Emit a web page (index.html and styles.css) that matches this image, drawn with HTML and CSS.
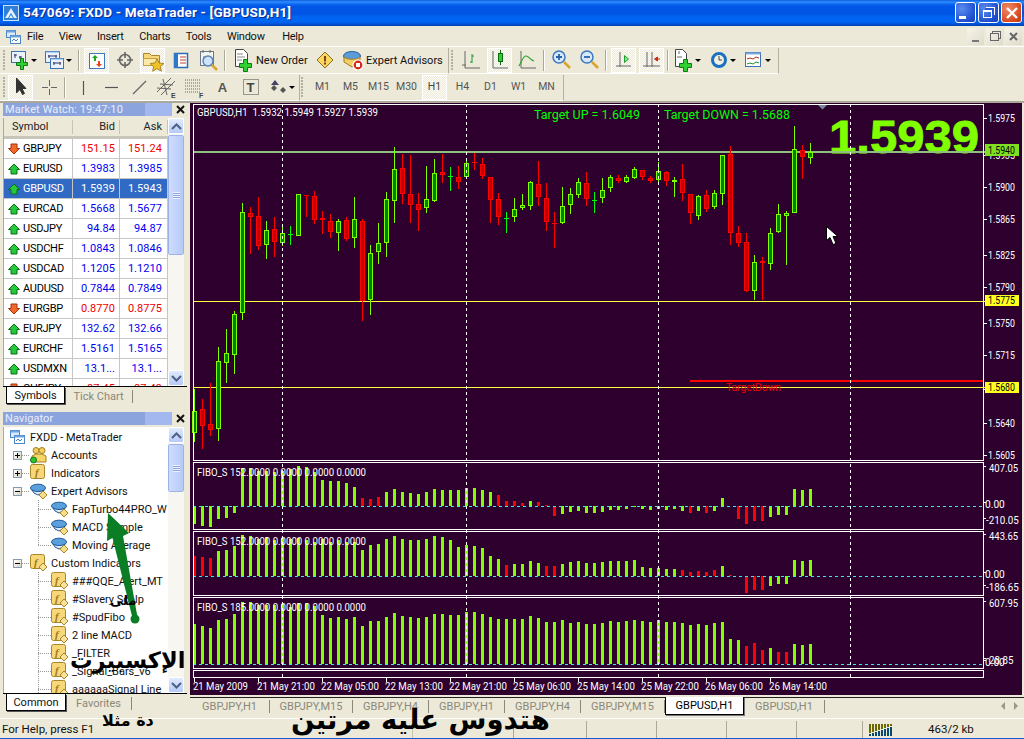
FILE: index.html
```html
<!DOCTYPE html>
<html lang="en">
<head>
<meta charset="utf-8">
<title>547069: FXDD - MetaTrader - [GBPUSD,H1]</title>
<link rel="stylesheet" href="styles.css">
</head>
<body>
<svg class="defs" width="0" height="0">
  <defs>
    <symbol id="s-app" viewBox="0 0 16 16"><rect x=".5" y=".5" width="15" height="15" fill="#2f7fd6" stroke="#cfe3fa"/><path d="M2 13 8 3l6 10H11L8 8l-3 5zM6 13l2-3 2 3z" fill="#dff1ff"/></symbol>
    <symbol id="s-mdi" viewBox="0 0 16 16"><rect x="1.5" y="1.5" width="9" height="7" fill="#dcebfb" stroke="#4a86c8"/><rect x="1.5" y="1.5" width="9" height="2" fill="#6fa3dc"/><rect x="5.5" y="6.5" width="10" height="8" fill="#fff" stroke="#4a86c8"/><rect x="5.5" y="6.5" width="10" height="2" fill="#6fa3dc"/><path d="M7 12l2-2 2 2 2-2" fill="none" stroke="#3c78c0"/></symbol>
    <symbol id="s-newchart" viewBox="0 0 24 24"><rect x="3.5" y="3.5" width="14" height="11" fill="#eaf3fd" stroke="#3a72b5"/><path d="M6 7h3M7 6v4M11 9h3M12 8v3" stroke="#336" fill="none"/><path d="M12.500 10.500h3v4h4v3h-4v4h-3v-4h-4v-3h4z" fill="#2fd02f" stroke="#0b7a16"/></symbol>
    <symbol id="s-profiles" viewBox="0 0 24 24"><rect x="2.5" y="3.5" width="14" height="11" fill="#eaf3fd" stroke="#3a72b5"/><rect x="2.5" y="3.5" width="14" height="1" fill="#7fa9e0"/><path d="M5 8h9M6 7v3M13 7v3" stroke="#336" fill="none"/><rect x="7.5" y="10.5" width="13" height="10" fill="#eaf3fd" stroke="#3a72b5"/><rect x="7.5" y="10.5" width="13" height="1" fill="#7fa9e0"/><path d="M10 15h8M11 14v3M17 14v3" stroke="#336" fill="none"/></symbol>
    <symbol id="s-market" viewBox="0 0 24 24"><rect x="4.500" y="5.500" width="15" height="15" fill="#fbfdff" stroke="#3f78bb"/><path d="M10 7l-3 3h2v3h2v-3h2z" fill="#17a81f"/><path d="M14 19l3-3h-2v-3h-2v3h-2z" fill="#e8401d"/></symbol>
    <symbol id="s-cross" viewBox="0 0 24 24"><circle cx="12" cy="12" r="5.5" fill="none" stroke="#666" stroke-width="1.6"/><path d="M12 4v6M12 14v6M4 12h6M14 12h6" stroke="#666" stroke-width="1.6"/></symbol>
    <symbol id="s-folder" viewBox="0 0 24 24"><path d="M2.5 5.500h6l2 2h8v10h-16z" fill="#f6d77a" stroke="#a9852d"/><path d="M2.5 10.500h14v7h-14z" fill="#fbe9a9" stroke="#c5a13e"/><path d="M16 11l2 4 5 .5-3.700 3.200 1.100 4.500-4.400-2.600-4.400 2.600 1.100-4.500L9 15.500l5-.5z" fill="#f0c224" stroke="#a9852d"/></symbol>
    <symbol id="s-book" viewBox="0 0 24 24"><rect x="5.500" y="5.500" width="13" height="14" fill="#fff" stroke="#2b6cb5" stroke-width="1.500"/><rect x="5" y="5" width="4" height="15" fill="#2e78c9"/><path d="M11 9h6M11 12h6M11 15h6" stroke="#b43" fill="none"/></symbol>
    <symbol id="s-tester" viewBox="0 0 24 24"><rect x="3.500" y="3.500" width="13" height="14" fill="#f5f5f0" stroke="#6a7a8a"/><path d="M6 2v3M13 2v3M6 9h8M6 12h4" stroke="#666"/><circle cx="11" cy="13" r="5" fill="#cfe2fa" stroke="#5b82b4" stroke-width="1.500"/><path d="M15 17l5 5" stroke="#d6a530" stroke-width="2.500"/></symbol>
    <symbol id="s-order" viewBox="0 0 24 24"><path d="M3.500 1.500h8l4 4v13h-12z" fill="#fff" stroke="#444"/><path d="M5 6h6M5 9h8M5 12h5" stroke="#888"/><path d="M11.500 11.500h4v4h4v4h-4v4h-4v-4h-4v-4h4z" fill="#2fd02f" stroke="#0b7a16"/></symbol>
    <symbol id="s-warn" viewBox="0 0 24 24"><path d="M12 4 20 12 12 20 4 12z" fill="#f8d860" stroke="#8a6f20"/><rect x="11" y="8" width="2" height="5.500" fill="#8a3d10"/><rect x="11" y="14.500" width="2" height="2" fill="#8a3d10"/></symbol>
    <symbol id="s-ea" viewBox="0 0 24 24"><ellipse cx="10" cy="8" rx="8.500" ry="4.500" fill="#5b9bd8" stroke="#2a5f9e"/><path d="M2 9c3 3 13 3 16 0v5l-8 5-8-5z" fill="#f3cd66" stroke="#a07d24"/><circle cx="16" cy="17" r="5" fill="#d8281a" stroke="#fff" stroke-width="1.200"/><rect x="14" y="15" width="4" height="4" fill="#fff"/></symbol>
    <symbol id="s-bars" viewBox="0 0 24 24"><path d="M5 3v17h15" fill="none" stroke="#666"/><path d="M2 17h4" stroke="#666"/><path d="M12 6v9M10 14h2M12 8h2" stroke="#1a9d2a" fill="none"/></symbol>
    <symbol id="s-candle" viewBox="0 0 24 24"><path d="M5 3v17h15" fill="none" stroke="#666"/><path d="M12.500 2v15" stroke="#0a6a12"/><rect x="10.500" y="5.500" width="4" height="8" fill="#2cd12c" stroke="#0a6a12"/></symbol>
    <symbol id="s-line" viewBox="0 0 24 24"><path d="M5 3v17h15" fill="none" stroke="#666"/><path d="M3 18c3-5 4-10 7-10s4 4 8 5" fill="none" stroke="#2aa32a" stroke-width="1.200"/></symbol>
    <symbol id="s-zin" viewBox="0 0 24 24"><circle cx="10" cy="9" r="6" fill="#d7e8fb" stroke="#3a78c0" stroke-width="1.500"/><path d="M7 9h6M10 6v6" stroke="#2a62a8" stroke-width="1.800"/><path d="M15 14l6 6" stroke="#d9a32d" stroke-width="2.500"/></symbol>
    <symbol id="s-zout" viewBox="0 0 24 24"><circle cx="10" cy="9" r="6" fill="#d7e8fb" stroke="#3a78c0" stroke-width="1.500"/><path d="M7 9h6" stroke="#2a62a8" stroke-width="1.800"/><path d="M15 14l6 6" stroke="#d9a32d" stroke-width="2.500"/></symbol>
    <symbol id="s-shift" viewBox="0 0 24 24"><path d="M8 4v15M4 18h15" fill="none" stroke="#666"/><path d="M12.500 7.500l4 3.500-4 3.500z" fill="#8fe08f" stroke="#1a9d2a"/></symbol>
    <symbol id="s-scroll" viewBox="0 0 24 24"><path d="M7 4v15M12 4v15M3 18h17" fill="none" stroke="#666"/><path d="M20 11h-4M17.500 9l-3 2 3 2z" fill="#c52a0e" stroke="#c52a0e"/></symbol>
    <symbol id="s-pageplus" viewBox="0 0 24 24"><path d="M3.500 1.500h7l4 4v13h-11z" fill="#fff" stroke="#444"/><path d="M7 3v3M5 9h5" stroke="#666"/><path d="M11.500 11.500h4v4h4v4h-4v4h-4v-4h-4v-4h4z" fill="#2fd02f" stroke="#0b7a16"/></symbol>
    <symbol id="s-clock" viewBox="0 0 24 24"><circle cx="12" cy="12" r="6.500" fill="#f2f0e2" stroke="#1c70c0" stroke-width="3"/><path d="M12 8v4h3" fill="none" stroke="#444"/></symbol>
    <symbol id="s-indic" viewBox="0 0 24 24"><rect x="3.500" y="4.500" width="15" height="14" fill="#fff" stroke="#3a72b5"/><rect x="3.500" y="4.500" width="15" height="2" fill="#7fa9e0"/><path d="M5 11l3-1 3 1 3-2 3 1" fill="none" stroke="#b5320e"/><path d="M5 16l3-1 3 1 3-2 3 1" fill="none" stroke="#2a8a2a"/></symbol>
    <symbol id="s-cursor" viewBox="0 0 24 24"><path d="M8.500 4v15l3.500-3.500 2.500 5 2-1-2.500-5H18z" fill="#333" stroke="#333" stroke-linejoin="round" transform="translate(-1 -1)"/></symbol>
    <symbol id="s-hair" viewBox="0 0 24 24"><path d="M12.500 5v6M12.500 14v6M5 12.500h6M14 12.500h6" stroke="#666"/></symbol>
    <symbol id="s-vline" viewBox="0 0 24 24"><path d="M12.500 6v14" stroke="#555" stroke-width="1.200"/></symbol>
    <symbol id="s-hline" viewBox="0 0 24 24"><path d="M6 12.500h13" stroke="#555" stroke-width="1.200"/></symbol>
    <symbol id="s-trend" viewBox="0 0 24 24"><path d="M6 19 19 6" stroke="#666" stroke-width="1.200"/></symbol>
    <symbol id="s-channel" viewBox="0 0 24 24"><path d="M2 17 16 3M6 20 20 6M5 9l13 1M2 13l14 1M8 4l4 16" stroke="#666" fill="none"/><text x="16" y="23" class="icon-letter">E</text></symbol>
    <symbol id="s-fibo" viewBox="0 0 24 24"><path d="M2 5h16M2 8h16M2 11h16M2 14h16M2 17h16" stroke="#666" stroke-dasharray="1 1"/><text x="16" y="23" class="icon-letter">F</text></symbol>
    <symbol id="s-textbox" viewBox="0 0 24 24"><rect x="4.500" y="4.500" width="15" height="15" fill="none" stroke="#444" stroke-dasharray="1 1"/><text x="7.500" y="17" class="icon-tee">T</text></symbol>
    <symbol id="s-arrows" viewBox="0 0 24 24"><path d="M9 5l4 5H5z" fill="#446" /><path d="M17 12l3 3-3 3-3-3zM8 10l3 3-3 3-3-3z" fill="#555"/></symbol>
    <symbol id="s-up" viewBox="0 0 14 12"><path d="M7 1 12.500 6.500H10V11H4V6.500H1.500z" fill="#25c83a" stroke="#0b6e1b"/></symbol>
    <symbol id="s-down" viewBox="0 0 14 12"><path d="M7 11 12.500 5.500H10V1H4V5.500H1.500z" fill="#f0682a" stroke="#a62f0c"/></symbol>
    <symbol id="s-accounts" viewBox="0 0 18 18"><circle cx="6" cy="4.500" r="3" fill="#f3ce5e" stroke="#a57f1f"/><circle cx="12" cy="4.500" r="3" fill="#f3ce5e" stroke="#a57f1f"/><path d="M2 15v-5l4-2 6 0 4 2v6H4z" fill="#f5d565" stroke="#a57f1f"/><circle cx="3.500" cy="14" r="3" fill="#2fc22f" stroke="#0d7a19"/></symbol>
    <symbol id="s-f" viewBox="0 0 18 18"><rect x=".5" y=".5" width="14" height="14" rx="2" fill="#f6d87a" stroke="#a88528"/><text x="5" y="11.500" class="icon-f">f</text></symbol>
    <symbol id="s-fd" viewBox="0 0 18 18"><rect x=".5" y=".5" width="14" height="14" rx="2" fill="#f6d87a" stroke="#a88528"/><text x="4" y="11.500" class="icon-f">f</text><path d="M13 9l4 4-4 4-4-4z" fill="#f6e29a" stroke="#a88528"/></symbol>
    <symbol id="s-hat" viewBox="0 0 18 18"><ellipse cx="8" cy="6" rx="7.500" ry="3.800" fill="#5aa0dc" stroke="#22599a"/><path d="M2 8c3 2 9 2 12 0l-2 3-4 2-4-2z" fill="#dfeaf5" stroke="#22599a"/><path d="M13 9l4 4-4 4-4-4z" fill="#f6dd86" stroke="#a88528"/></symbol>
    <symbol id="s-close" viewBox="0 0 9 9"><path d="M1 1l7 7M8 1 1 8" stroke="#111" stroke-width="2"/></symbol>
    <symbol id="s-sup" viewBox="0 0 11 7"><path d="M1 6l4.500-4.500L10 6" fill="none" stroke="#4d6185" stroke-width="2"/></symbol>
    <symbol id="s-sdn" viewBox="0 0 11 7"><path d="M1 1l4.500 4.500L10 1" fill="none" stroke="#4d6185" stroke-width="2"/></symbol>
  </defs>
</svg>

<div class="app">
  <header class="titlebar">
    <svg class="app-icon"><use href="#s-app"/></svg>
    <div class="title-text">547069: FXDD - MetaTrader - [GBPUSD,H1]</div>
    <div class="winbtns">
      <div class="winbtn"><span class="glyph-min"></span></div>
      <div class="winbtn"><span class="glyph-res"></span></div>
      <div class="winbtn winbtn-close"><svg class="glyph-x" viewBox="0 0 12 12"><path d="M1 1l10 10M11 1 1 11" stroke="#fff" stroke-width="2.400"/></svg></div>
    </div>
  </header>

  <nav class="menubar">
    <svg class="mdi-icon"><use href="#s-mdi"/></svg>
    <span class="menu m-first">File</span>
    <span class="menu">View</span>
    <span class="menu">Insert</span>
    <span class="menu">Charts</span>
    <span class="menu">Tools</span>
    <span class="menu">Window</span>
    <span class="menu m-help">Help</span>
    <div class="mdibtns">
      <span class="mdibtn"><span class="mdi-min"></span></span>
      <span class="mdibtn"><span class="mdi-res"></span></span>
      <span class="mdibtn"><svg class="mdi-x" viewBox="0 0 9 9"><path d="M1 1l7 7M8 1 1 8" stroke="#666" stroke-width="2"/></svg></span>
    </div>
  </nav>

  <div class="tbrow">
    <div class="tbgroup g1">
      <span class="grip"></span>
      <div class="tb w32"><svg class="ic"><use href="#s-newchart"/></svg><i class="drop"></i></div>
      <div class="tb w32"><svg class="ic"><use href="#s-profiles"/></svg><i class="drop"></i></div>
      <span class="sep sep-b"></span>
      <div class="tb on"><svg class="ic"><use href="#s-market"/></svg></div>
      <div class="tb"><svg class="ic"><use href="#s-cross"/></svg></div>
      <div class="tb on"><svg class="ic"><use href="#s-folder"/></svg></div>
      <div class="tb"><svg class="ic"><use href="#s-book"/></svg></div>
      <div class="tb"><svg class="ic"><use href="#s-tester"/></svg></div>
      <span class="sep sep-b"></span>
      <div class="tb w79"><svg class="ic"><use href="#s-order"/></svg><span class="tb-label">New Order</span></div>
      <div class="tb"><svg class="ic"><use href="#s-warn"/></svg></div>
      <div class="tb w105"><svg class="ic"><use href="#s-ea"/></svg><span class="tb-label">Expert Advisors</span></div>
    </div>
    <div class="tbgroup g2">
      <span class="grip grip-b"></span>
      <div class="tb"><svg class="ic"><use href="#s-bars"/></svg></div>
      <div class="tb on"><svg class="ic"><use href="#s-candle"/></svg></div>
      <div class="tb"><svg class="ic"><use href="#s-line"/></svg></div>
      <span class="sep"></span>
      <div class="tb"><svg class="ic"><use href="#s-zin"/></svg></div>
      <div class="tb"><svg class="ic"><use href="#s-zout"/></svg></div>
      <span class="sep sep-c"></span>
      <div class="tb on"><svg class="ic"><use href="#s-shift"/></svg></div>
      <div class="tb on"><svg class="ic"><use href="#s-scroll"/></svg></div>
      <span class="sep"></span>
      <div class="tb w32"><svg class="ic"><use href="#s-pageplus"/></svg><i class="drop"></i></div>
      <div class="tb w32"><svg class="ic"><use href="#s-clock"/></svg><i class="drop"></i></div>
      <div class="tb w32"><svg class="ic"><use href="#s-indic"/></svg><i class="drop"></i></div>
    </div>
  </div>

  <div class="tbrow tbrow-2">
    <div class="tbgroup g3">
      <span class="grip"></span>
      <div class="tb on"><svg class="ic"><use href="#s-cursor"/></svg></div>
      <div class="tb"><svg class="ic"><use href="#s-hair"/></svg></div>
      <span class="sep sep-b"></span>
      <div class="tb"><svg class="ic"><use href="#s-vline"/></svg></div>
      <div class="tb"><svg class="ic"><use href="#s-hline"/></svg></div>
      <div class="tb"><svg class="ic"><use href="#s-trend"/></svg></div>
      <div class="tb"><svg class="ic"><use href="#s-channel"/></svg></div>
      <div class="tb"><svg class="ic"><use href="#s-fibo"/></svg></div>
      <div class="tb tb-letter">A</div>
      <div class="tb"><svg class="ic"><use href="#s-textbox"/></svg></div>
      <div class="tb w32"><svg class="ic"><use href="#s-arrows"/></svg><i class="drop"></i></div>
    </div>
    <div class="tbgroup g4">
      <span class="grip grip-c"></span>
      <div class="tb tf">M1</div>
      <div class="tb tf">M5</div>
      <div class="tb tf">M15</div>
      <div class="tb tf">M30</div>
      <div class="tb tf on">H1</div>
      <div class="tb tf">H4</div>
      <div class="tb tf">D1</div>
      <div class="tb tf">W1</div>
      <div class="tb tf">MN</div>
    </div>
  </div>

  <main class="workspace">
    <aside class="leftcol">
      <section class="panel panel-mw">
        <div class="panel-head"><div class="panel-title">Market Watch: 19:47:10</div><svg class="panel-x"><use href="#s-close"/></svg></div>
        <div class="panel-body">
          <div class="listview">
            <div class="lv-head"><span class="c1">Symbol</span><span class="c2">Bid</span><span class="c3">Ask</span></div>
            <div class="lv-band"></div>
            <div class="lv-row dn"><span class="c1"><svg class="arrow"><use href="#s-down"/></svg>GBPJPY</span><span class="c2">151.15</span><span class="c3">151.24</span></div>
            <div class="lv-row"><span class="c1"><svg class="arrow"><use href="#s-up"/></svg>EURUSD</span><span class="c2">1.3983</span><span class="c3">1.3985</span></div>
            <div class="lv-row sel"><span class="c1"><svg class="arrow"><use href="#s-up"/></svg>GBPUSD</span><span class="c2">1.5939</span><span class="c3">1.5943</span></div>
            <div class="lv-row"><span class="c1"><svg class="arrow"><use href="#s-up"/></svg>EURCAD</span><span class="c2">1.5668</span><span class="c3">1.5677</span></div>
            <div class="lv-row"><span class="c1"><svg class="arrow"><use href="#s-up"/></svg>USDJPY</span><span class="c2">94.84</span><span class="c3">94.87</span></div>
            <div class="lv-row"><span class="c1"><svg class="arrow"><use href="#s-up"/></svg>USDCHF</span><span class="c2">1.0843</span><span class="c3">1.0846</span></div>
            <div class="lv-row"><span class="c1"><svg class="arrow"><use href="#s-up"/></svg>USDCAD</span><span class="c2">1.1205</span><span class="c3">1.1210</span></div>
            <div class="lv-row"><span class="c1"><svg class="arrow"><use href="#s-up"/></svg>AUDUSD</span><span class="c2">0.7844</span><span class="c3">0.7849</span></div>
            <div class="lv-row dn"><span class="c1"><svg class="arrow"><use href="#s-down"/></svg>EURGBP</span><span class="c2">0.8770</span><span class="c3">0.8775</span></div>
            <div class="lv-row"><span class="c1"><svg class="arrow"><use href="#s-up"/></svg>EURJPY</span><span class="c2">132.62</span><span class="c3">132.66</span></div>
            <div class="lv-row"><span class="c1"><svg class="arrow"><use href="#s-up"/></svg>EURCHF</span><span class="c2">1.5161</span><span class="c3">1.5165</span></div>
            <div class="lv-row"><span class="c1"><svg class="arrow"><use href="#s-up"/></svg>USDMXN</span><span class="c2">13.1...</span><span class="c3">13.1...</span></div>
            <div class="lv-row dn"><span class="c1"><svg class="arrow"><use href="#s-down"/></svg>CHFJPY</span><span class="c2">87.45</span><span class="c3">87.49</span></div>
          </div>
          <div class="scrollbar">
            <div class="sb-btn"><svg class="sb-ic"><use href="#s-sup"/></svg></div>
            <div class="sb-track"><div class="sb-thumb thumb-mw"><i class="grips"></i></div></div>
            <div class="sb-btn"><svg class="sb-ic"><use href="#s-sdn"/></svg></div>
          </div>
        </div>
        <div class="ptabs"><span class="ptab active t-sym">Symbols</span><span class="ptab t-tick">Tick Chart</span></div>
      </section>

      <section class="panel panel-nav">
        <div class="panel-head"><div class="panel-title">Navigator</div><svg class="panel-x"><use href="#s-close"/></svg></div>
        <div class="panel-body body-nav">
          <div class="tree">
            <div class="node lv0"><svg class="ti ti0"><use href="#s-mdi"/></svg>FXDD - MetaTrader</div>
            <div class="node lv1"><i class="exp plus"></i><i class="dots"></i><svg class="ti"><use href="#s-accounts"/></svg>Accounts</div>
            <div class="node lv1"><i class="exp plus"></i><i class="dots"></i><svg class="ti"><use href="#s-f"/></svg>Indicators</div>
            <div class="node lv1"><i class="exp"></i><i class="dots"></i><svg class="ti"><use href="#s-hat"/></svg>Expert Advisors</div>
            <div class="node lv2"><i class="conn"></i><svg class="ti"><use href="#s-hat"/></svg>FapTurbo44PRO_W</div>
            <div class="node lv2"><i class="conn"></i><svg class="ti"><use href="#s-hat"/></svg>MACD Sample</div>
            <div class="node lv2"><i class="conn conn-end"></i><svg class="ti"><use href="#s-hat"/></svg>Moving Average</div>
            <div class="node lv1"><i class="exp"></i><i class="dots"></i><svg class="ti"><use href="#s-fd"/></svg>Custom Indicators</div>
            <div class="node lv2"><i class="conn"></i><svg class="ti"><use href="#s-fd"/></svg>###QQE_Alert_MT</div>
            <div class="node lv2"><i class="conn"></i><svg class="ti"><use href="#s-fd"/></svg>#Slavery Scalp</div>
            <div class="node lv2"><i class="conn"></i><svg class="ti"><use href="#s-fd"/></svg>#SpudFibo</div>
            <div class="node lv2"><i class="conn"></i><svg class="ti"><use href="#s-fd"/></svg>2 line MACD</div>
            <div class="node lv2"><i class="conn"></i><svg class="ti"><use href="#s-fd"/></svg>_FILTER</div>
            <div class="node lv2"><i class="conn"></i><svg class="ti"><use href="#s-fd"/></svg>_Signal_Bars_v6</div>
            <div class="node lv2"><i class="conn"></i><svg class="ti"><use href="#s-fd"/></svg>aaaaaaSignal Line</div>
          </div>
          <div class="scrollbar">
            <div class="sb-btn"><svg class="sb-ic"><use href="#s-sup"/></svg></div>
            <div class="sb-track"><div class="sb-thumb thumb-nav"><i class="grips"></i></div></div>
            <div class="sb-btn"><svg class="sb-ic"><use href="#s-sdn"/></svg></div>
          </div>
        </div>
        <div class="ptabs"><span class="ptab active t-common">Common</span><span class="ptab t-fav">Favorites</span></div>
      </section>
    </aside>

    <section class="chartcol">
      <svg id="chart" class="chart" width="834" height="592" viewBox="190 103 834 592"></svg>
      <div class="ctabs">
        <span class="ctab tw-a">GBPJPY,H1</span>
        <span class="ctab tw-b">GBPJPY,M15</span>
        <span class="ctab tw-c">GBPJPY,H4</span>
        <span class="ctab tw-c">GBPJPY,H1</span>
        <span class="ctab tw-c">GBPJPY,H4</span>
        <span class="ctab tw-d">GBPJPY,M15</span>
        <span class="ctab active tw-e">GBPUSD,H1</span>
        <span class="ctab tw-f">GBPUSD,H1</span>
        <span class="ctab-nav"><i class="nav-l"></i><i class="nav-r"></i></span>
      </div>
    </section>
  </main>

  <footer class="statusbar">
    <span class="sc sc-help">For Help, press F1</span>
    <span class="sc sc-a"></span>
    <span class="sc sc-b"></span>
    <span class="sc sc-c"></span>
    <span class="sc sc-c"></span>
    <span class="sc sc-c"></span>
    <span class="sc sc-d"></span>
    <span class="sc sc-conn"><svg class="conn-bars" viewBox="0 0 24 12"><path d="M1 0h2v9H1zM4 0h2v8H4zM7 0h2v7H7zM10 0h2v6h-2zM13 0h2v5h-2zM16 0h2v4h-2zM19 0h2v3h-2zM22 0h2v2h-2z" fill="#6a6a00"/><path d="M1 10h2v2H1zM4 9h2v3H4zM7 8h2v4H7zM10 7h2v5h-2zM13 6h2v6h-2zM16 5h2v7h-2zM19 4h2v8h-2zM22 3h2v9h-2z" fill="#0a4a6e"/></svg><span class="kb">463/2 kb</span></span>
  </footer>

  <svg class="overlay-arrow" viewBox="0 0 60 120">
    <path d="M33 108 12.500 26 7 29 8 1 29 21 23 24 38 108z" fill="#0a7d25"/>
    <circle cx="35" cy="107" r="4.500" fill="#0a7d25"/>
  </svg>
  <span class="ink ink-a" dir="rtl" lang="ar">ملى</span>
  <span class="ink ink-b" dir="rtl" lang="ar">الإكسبيرت</span>
  <span class="ink ink-c" dir="rtl" lang="ar">دة مثلا</span>
  <span class="ink ink-d" dir="rtl" lang="ar">هتدوس عليه مرتين</span>
</div>
<script src="chart.js"></script>
</body>
</html>
```
FILE: styles.css
```css
* { box-sizing: border-box; }
html, body { margin: 0; padding: 0; }
body { width: 1024px; height: 739px; overflow: hidden; background: #ece9d8; font: 11px/1 Roboto, "Liberation Sans", sans-serif; color: #000; }
.defs { position: absolute; }
.app { position: relative; width: 1024px; height: 739px; display: flex; flex-direction: column; background: #ece9d8; border-bottom: 1px solid #1a5cc8; }

/* title bar */
.titlebar { height: 26px; flex: none; display: flex; align-items: center; padding: 0 2px 1px 3px; background: linear-gradient(180deg, #0a5ee0 0, #2f8cff 2px, #0f6bf0 4px, #0058e8 6px, #0054e3 14px, #0064f2 17px, #0064f2 22px, #0053d6 24px, #003fb0 26px); }
.app-icon { width: 16px; height: 16px; flex: none; }
.title-text { margin-left: 4px; font: 700 13.5px/1 Roboto, sans-serif; letter-spacing: .17px; color: #fff; text-shadow: 1px 1px 0 #0f2e8c; }
.winbtns { margin-left: auto; display: flex; gap: 2px; }
.winbtn { width: 21px; height: 21px; border: 1px solid #fff; border-radius: 3px; background: radial-gradient(circle at 30% 30%, #5c8df0, #1f4fd0 70%, #1b3fb8); display: flex; align-items: center; justify-content: center; position: relative; }
.winbtn-close { background: radial-gradient(circle at 30% 30%, #ee8a68, #d8491f 70%, #bb3512); }
.glyph-min { width: 7px; height: 3px; background: #fff; margin: 10px 6px 0 0; }
.glyph-res { width: 9px; height: 8px; border: 1px solid #fff; border-top-width: 2px; box-shadow: 2px -2px 0 -0px #2a58d4, 3px -3px 0 0 #fff; margin: 3px 2px 0 0; }
.glyph-x { width: 12px; height: 12px; }

/* menu */
.menubar { height: 21px; flex: none; display: flex; align-items: center; position: relative; padding-left: 5px; padding-top: 1px; border-bottom: 1px solid #fff; }
.mdi-icon { width: 16px; height: 16px; flex: none; }
.menu { font-size: 11px; letter-spacing: -.25px; color: #111; margin-left: 15.500px; }
.m-first { margin-left: 6px; }
.m-help { margin-left: 17.500px; }
.mdibtns { margin-left: auto; display: flex; gap: 2px; margin-right: 2px; }
.mdibtn { width: 17px; height: 17px; background: linear-gradient(135deg, #f6f4ea, #dedbca); display: flex; align-items: center; justify-content: center; }
.mdi-min { width: 7px; height: 2px; background: #777; margin-top: 8px; }
.mdi-res { width: 9px; height: 8px; border: 1px solid #666; box-shadow: 2px -2px 0 -1px #eeebdd, 2px -2px 0 0 #666; }
.mdi-x { width: 9px; height: 9px; }

/* toolbars */
.tbrow { height: 27px; flex: none; display: flex; align-items: center; }
.tbrow-2 { height: 29px; border-bottom: 2px solid #aca899; }
.tbgroup { display: flex; align-items: center; height: 26px; border-bottom: 1px solid #fff; border-right: 1px solid #b4b09f; }
.g1 { width: 449px; padding-left: 3px; }
.g2 { width: 330px; padding-left: 0; }
.g3 { width: 300px; padding-left: 3px; }
.g4 { width: 264px; padding-left: 0; }
.grip { width: 2px; height: 20px; flex: none; margin-right: 3px; background: repeating-linear-gradient(180deg, #b4b09f 0 2px, #ece9d8 2px 3px); }
.grip-b { margin: 0 6px 0 2px; }
.grip-c { margin: 0 7px 0 1px; }
.tb { width: 25px; height: 25px; flex: none; margin-right: 3px; display: flex; align-items: center; justify-content: center; position: relative; }
.tb.on { border: 1px solid #fff; background: repeating-conic-gradient(#fdfcf8 0 25%, #ece9d8 0 50%) 0 0 / 2px 2px; }
.ic { width: 24px; height: 24px; flex: none; }
.w32 { width: 32px; margin-right: 3px; justify-content: flex-start; }
.w79 { width: 79px; justify-content: flex-start; padding-left: 2px; }
.w105 { width: 105px; justify-content: flex-start; padding-left: 2px; }
.tb-label { font-size: 11px; color: #111; white-space: nowrap; }
.drop { width: 0; height: 0; margin-left: -1px; border: 3px solid transparent; border-top: 3px solid #000; border-bottom: 0; flex: none; }
.sep { width: 2px; height: 21px; flex: none; margin-right: 3px; background: #aca899; border-right: 1px solid #fff; }
.sep-b { margin-right: 4px; }
.sep-c { margin: 0 4px 0 1px; }
.tb-letter { font: 700 13px/1 "Liberation Sans", sans-serif; color: #555; }
.tf { font-size: 10.500px; color: #555; }
.tf.on { color: #444; }
.icon-letter { font: 700 7px "Liberation Sans", sans-serif; fill: #444; }
.icon-tee { font: 700 13px "Liberation Sans", sans-serif; fill: #444; }
.icon-f { font: italic 700 11px "Liberation Serif", serif; fill: #a2791a; }

/* workspace */
.workspace { flex: none; height: 615px; display: flex; }
.leftcol { width: 190px; flex: none; display: flex; flex-direction: column; }
.panel { display: flex; flex-direction: column; }
.panel-mw { height: 305px; }
.panel-nav { height: 303px; margin-top: 4px; }
.panel-head { height: 13px; flex: none; display: flex; align-items: center; padding-left: 3px; }
.panel-title { width: 169px; height: 13px; padding-left: 2px; font-size: 11px; line-height: 13px; color: #e9eefb; background: linear-gradient(90deg, #8ba4de 0, #8ba4de 84%, #a3b8ee 84%, #a3b8ee 100%); letter-spacing: .1px; }
.panel-x { width: 9px; height: 9px; margin-left: 4px; flex: none; }
.panel-body { margin: 2px 0 0 3px; width: 181px; height: 268px; flex: none; display: flex; background: #fff; border-left: 1px solid #aca899; overflow: hidden; }
.body-nav { height: 266px; }

/* market watch list */
.listview { width: 164px; flex: none; overflow: hidden; }
.lv-head { height: 18px; display: flex; align-items: center; background: #ece9d8; color: #222; font-size: 11px; }
.lv-head span { height: 14px; line-height: 14px; border-right: 1px solid #c8c4b2; }
.lv-band { height: 3px; background: #c8c6ba; }
.c1 { width: 69px; flex: none; padding-left: 8px; }
.c2 { width: 47px; flex: none; text-align: right; padding-right: 4px; }
.c3 { width: 48px; flex: none; text-align: right; padding-right: 5px; }
.lv-row { height: 20px; display: flex; align-items: stretch; font-size: 11px; color: #0000f0; border-bottom: 1px solid #c6c6c6; }
.lv-row span { display: flex; align-items: center; border-right: 1px solid #c6c6c6; justify-content: flex-end; letter-spacing: .05px; }
.lv-row .c1 { justify-content: flex-start; padding-left: 3px; color: #000; letter-spacing: -.25px; }
.lv-row.dn { color: #f00000; }
.lv-row.sel { background: #316ac5; color: #fff; }
.lv-row.sel .c1 { color: #fff; }
.arrow { width: 14px; height: 12px; margin-right: 2px; flex: none; }

/* scrollbars */
.scrollbar { width: 16px; flex: none; display: flex; flex-direction: column; background: #f7f6f0; }
.sb-btn { height: 16px; flex: none; display: flex; align-items: center; justify-content: center; border: 1px solid #fff; border-radius: 2px; background: linear-gradient(180deg, #e1eafe, #b6caf8); }
.sb-ic { width: 11px; height: 7px; }
.sb-track { flex: 1; }
.sb-thumb { margin: 1px 0; border: 1px solid #fff; outline: 1px solid #9bb3e8; outline-offset: -1px; border-radius: 2px; background: linear-gradient(90deg, #cfdcfc, #b6caf8); display: flex; align-items: center; justify-content: center; }
.thumb-mw { height: 120px; }
.thumb-nav { height: 48px; }
.grips { width: 7px; height: 7px; background: repeating-linear-gradient(180deg, #eef3ff 0 1px, #8aa4dd 1px 2px); }

/* panel tabs */
.ptabs { height: 20px; flex: none; margin: 0 3px; display: flex; border-top: 1px solid #000; padding-left: 3px; font-size: 11px; color: #8a8878; }
.ptab { height: 17px; line-height: 17px; text-align: center; }
.ptab.active { background: #fff; color: #111; border: 1px solid #000; border-top: 0; box-shadow: 1px 1px 0 #555; }
.t-sym { width: 59px; }
.t-tick { width: 68px; border-right: 1px solid #8a8878; margin-top: 3px; height: 13px; line-height: 13px; }
.t-common { width: 60px; }
.t-fav { width: 66px; border-right: 1px solid #8a8878; margin-top: 3px; height: 13px; line-height: 13px; }

/* navigator tree */
.tree { width: 164px; flex: none; overflow: hidden; white-space: nowrap; font-size: 11px; color: #111; padding-top: 1px; }
.node { height: 18px; display: flex; align-items: center; }
.lv0 { padding-left: 5px; }
.lv1 { padding-left: 9px; }
.lv2 { padding-left: 34px; }
.ti { width: 18px; height: 18px; flex: none; margin-right: 3px; }
.ti0 { width: 16px; height: 16px; margin-right: 5px; }
.exp { width: 9px; height: 9px; flex: none; border: 1px solid #7f9db9; background: linear-gradient(135deg, #fff, #d8d4c4) ; display: block; position: relative; }
.exp::before { content: ""; position: absolute; left: 1px; top: 3px; width: 5px; height: 1px; background: #000; }
.exp.plus::after { content: ""; position: absolute; left: 3px; top: 1px; width: 1px; height: 5px; background: #000; }
.dots { width: 8px; height: 1px; flex: none; background: repeating-linear-gradient(90deg, #999 0 1px, transparent 1px 2px); }
.conn { width: 13px; height: 18px; flex: none; background: repeating-linear-gradient(180deg, #999 0 1px, transparent 1px 2px) 0 0 / 1px 100% no-repeat, repeating-linear-gradient(90deg, #999 0 1px, transparent 1px 2px) 0 9px / 100% 1px no-repeat; }
.conn-end { background-size: 1px 10px, 100% 1px; }

/* chart */
.chartcol { width: 834px; flex: none; display: flex; flex-direction: column; }
.chart { display: block; flex: none; background: #2d002e; }
.chart text { font-family: Roboto, "Liberation Sans", sans-serif; white-space: pre; }
.t-w { font-size: 10.500px; fill: #fff; }
.t-k { font-size: 10.500px; fill: #000; }
.t-g { font-size: 12px; fill: #00ff00; }
.t-r { font-size: 10.500px; fill: #f00000; }
.chart text.t-big { font: 700 46px "Liberation Sans", sans-serif; fill: #7fff00; stroke: #7fff00; stroke-width: .8px; }

/* chart tabs */
.ctabs { height: 20px; flex: none; margin-top: 2px; display: flex; background: #ece9d8; border-top: 1px solid #222; color: #8a8878; font-size: 11px; position: relative; }
.ctab { display: flex; height: 13px; margin-top: 2px; align-items: center; justify-content: center; border-right: 1px solid #8a8878; flex: none; }
.ctab.active { background: #fff; color: #000; height: 18px; margin-top: -1px; border: 1px solid #000; border-top: 0; box-shadow: 1px 1px 0 #777; }
.tw-a { width: 80px; }
.tw-b { width: 83px; }
.tw-c { width: 76px; }
.tw-d { width: 84px; }
.tw-e { width: 79px; }
.tw-f { width: 81px; }
.ctab-nav { margin-left: auto; display: flex; gap: 9px; margin: 4px 6px 0 auto; }
.nav-l { width: 0; height: 0; border: 4px solid transparent; border-right: 4px solid #9a9888; border-left: 0; }
.nav-r { width: 0; height: 0; border: 4px solid transparent; border-left: 4px solid #9a9888; border-right: 0; }

/* status bar */
.statusbar { height: 20px; flex: none; display: flex; border-top: 1px solid #fff; padding-top: 2px; font-size: 11.500px; color: #111; }
.sc { height: 17px; flex: none; border-right: 1px solid #aca899; display: flex; align-items: center; padding-top: 1px; }
.sc-help { width: 413px; padding-left: 2px; border-right-color: #c8c4b2; }
.sc-a { width: 101px; }
.sc-b { width: 73px; }
.sc-c { width: 70px; }
.sc-d { width: 66px; }
.sc-conn { border-right: 0; padding-left: 5px; }
.conn-bars { width: 24px; height: 12px; flex: none; }
.kb { margin-left: 36px; }

/* hand-drawn annotations */
.overlay-arrow { position: absolute; left: 100px; top: 512px; width: 60px; height: 120px; }
.ink { position: absolute; font: 700 14px/1 "DejaVu Sans", sans-serif; color: #000; white-space: nowrap; }
.ink-a { left: 110px; top: 594px; font-size: 13px; }
.ink-b { left: 70px; top: 649px; font-size: 22.500px; }
.ink-c { left: 102px; top: 713px; font-size: 16px; }
.ink-d { left: 291px; top: 706px; font-size: 27.500px; }
```
FILE: chart.js
```js
// MetaTrader H1 chart, drawn from data. Coordinates noted in 3x-scale values.
var NS = 'http://www.w3.org/2000/svg';
var svg = document.getElementById('chart');

function add(tag, attrs, text) {
  var el = document.createElementNS(NS, tag);
  for (var k in attrs) el.setAttribute(k, attrs[k]);
  if (text !== undefined) el.textContent = text;
  svg.appendChild(el);
  return el;
}
function label(x, y, str, cls, len) {
  var a = { x: x, y: y, 'class': cls };
  if (len) { a.textLength = len; a.lengthAdjust = 'spacingAndGlyphs'; }
  return add('text', a, str);
}
function rect(x, y, w, h, fill) { return add('rect', { x: x, y: y, width: w, height: h, fill: fill }); }
var bx = function (k) { return 194 + 8 * k; };

var CANDLES = [
 ['g',868,1025,932,1000],['r',897,1047,928,977],['r',850,1007,973,989],['g',742,1022,784,986],['g',687,849,760,788],['g',633,822,643,764],
 ['g',309,659,337,640],['r',322,461,340,352],['r',292,449,349,437],['g',364,476,391,434],['r',352,470,388,425],['g',379,437,400,428],
 ['g',379,435,403,403],['g',283,407,283,407],['r',285,351,285,285],['r',274,371,289,359],['r',334,401,355,361],['r',343,413,364,395],
 ['g',358,452,364,398],['r',352,423,361,416],['g',292,443,358,413],['r',358,662,364,602],['g',436,644,460,599],['g',370,491,430,455],
 ['g',277,470,298,428],['g',142,368,208,302],['r',163,311,205,283],['r',166,370,283,314],['r',280,392,313,329],['g',199,338,298,325],
 ['g',178,305,220,302],['r',163,248,217,226],['g',202,272,229,229],['r',199,267,232,247],['g',178,235,190,232],['r',160,209,187,187],
 ['r',175,236,193,229],['r',232,369,232,301],['r',280,374,298,352],['g',337,398,355,355],['g',295,365,328,352],['g',283,329,316,325],
 ['g',244,329,247,319],['r',184,317,253,292],['r',250,392,295,367],['r',337,443,370,370],['g',262,371,319,370],['g',265,341,283,316],
 ['g',235,295,247,286],['r',217,317,250,298],['g',277,340,299,299],['g',235,310,271,295],
 ['g',226,275,232,265],['r',226,250,235,244],['g',226,248,232,247],['g',202,238,208,235],['r',211,241,211,232],['r',229,250,235,244],
 ['g',187,245,214,241],['r',214,257,217,244],['g',232,290,241,247],['r',193,302,238,280],['r',283,371,283,340],['g',286,359,289,347],
 ['r',271,335,286,326],['g',271,328,280,322],['g',166,314,166,283],['r',138,434,163,400],['r',379,440,400,430],['r',400,575,427,572],
 ['g',466,599,487,574],['r',472,599,484,490],['g',385,509,400,493],['g',313,398,343,397],['g',334,494,340,349],['g',78,338,148,338],
 ['r',136,236,151,172],['g',130,191,157,175]
];

// sub-window bars: 3x-scale end value from the window's origin, negative = red
var SUB1 = [207,213,216,192,189,174,40,40,49,49,52,49,43,34,37,52,76,78,78,84,96,-129,-132,-126,111,102,111,114,117,111,102,105,105,105,99,99,105,111,-120,-138,-138,-144,138,-141,-150,-183,177,171,168,174,174,171,165,165,162,156,162,165,162,165,162,168,-174,168,-174,168,129,0,-192,-207,-198,-198,186,180,180,102,105,102];
var SUB2 = [-304,-306,-309,288,285,273,240,243,252,246,255,249,252,249,255,261,252,261,255,261,261,285,270,267,252,243,252,255,255,252,243,246,255,276,270,273,279,303,312,-330,327,327,318,324,-333,-333,327,321,318,324,324,321,318,318,318,315,336,339,339,342,342,-345,-351,-348,-351,-345,333,-360,0,-414,-405,-405,393,387,387,315,318,315];
var SUB3 = [507,513,519,495,492,477,441,441,450,450,450,447,456,444,444,453,480,489,486,492,486,513,498,498,486,474,483,486,489,486,477,477,480,480,471,471,477,486,492,492,492,492,483,489,501,501,495,504,501,507,507,504,498,501,498,495,498,501,495,501,501,504,510,507,510,504,501,552,555,-573,-564,-585,579,-591,-591,567,570,567];

function frame(x, y, w, h) {
  add('rect', { x: x + .5, y: y + .5, width: w, height: h, fill: 'none', stroke: '#fff' });
}
function subBars(values, baseY) {
  values.forEach(function (v, k) {
    if (!v) return;
    var red = v < 0, z = Math.abs(v), end = 455 + z / 3;
    var top = Math.round(Math.min(end, baseY)), bot = Math.round(Math.max(end, baseY));
    rect(bx(k) - 1, top, 3, bot - top, red ? '#ff0000' : '#7fff00');
  });
}
function baseline(y) {
  add('line', { x1: 193, x2: 983, y1: y + .5, y2: y + .5, stroke: '#38e8e8', 'stroke-dasharray': '3 3' });
}

// big price goes under the grid lines
label(829, 153, '1.5939', 't-big', 150);

// price lines
rect(193, 151, 792, 2, '#90c080');
rect(193, 301, 792, 1, '#ffff40');
rect(193, 387, 792, 1, '#ffff40');
rect(690, 380, 293, 2, '#ff0000');
label(726, 391, 'TargetDown', 't-r', 55);

// candles
CANDLES.forEach(function (c, k) {
  var x = bx(k), up = c[0] === 'g';
  var y = function (z) { return Math.round(100 + z / 3); };
  var stroke = up ? '#7fff00' : '#ff0000';
  var fill = up ? '#008000' : '#c00000';
  var wt = y(c[1]), wb = y(c[2]), bt = y(c[3]), bb = y(c[4]);
  if (bt === bb) {
    var dj = up ? '#00ff00' : '#ff0000';
    rect(x, wt, 1, wb - wt, dj);
    rect(x - 2, bt, 5, 1, dj);
    return;
  }
  rect(x, wt, 1, wb - wt, stroke);
  rect(x - 2, bt, 5, bb - bt, stroke);
  if (bb - bt > 2) rect(x - 1, bt + 1, 3, bb - bt - 2, fill);
});

// sub-window bars
subBars(SUB1, 506);
subBars(SUB2, 576);
subBars(SUB3, 664);
baseline(506); baseline(576); baseline(664);

// vertical period separators
[282, 466, 658, 850].forEach(function (x) {
  add('line', { x1: x + .5, x2: x + .5, y1: 104, y2: 678, stroke: '#fff', 'stroke-dasharray': '3 3' });
});

// window frames
frame(193, 104, 790, 356);
frame(193, 462, 790, 67);
frame(193, 531, 790, 64);
frame(193, 597, 790, 71);
frame(193, 670, 790, 7);

// header texts
label(197, 116, 'GBPUSD,H1  1.5932 1.5949 1.5927 1.5939', 't-w', 181);
label(534, 119, 'Target UP = 1.6049', 't-g', 106);
label(664, 119, 'Target DOWN = 1.5688', 't-g', 126);
label(197, 476, 'FIBO_S 152.0000 0.0000 0.0000 0.0000', 't-w', 169);
label(197, 545, 'FIBO_S 152.0000 0.0000 0.0000 0.0000', 't-w', 169);
label(197, 611, 'FIBO_S 185.0000 0.0000 0.0000 0.0000', 't-w', 169);

// price axis
[[1.5975,118],[1.5935,155],[1.59,187],[1.5865,219],[1.5825,255],[1.579,287],[1.575,323],[1.5715,355],[1.5675,389],[1.564,423],[1.5605,455]].forEach(function (p) {
  rect(983, p[1], 4, 1, '#fff');
  label(988, p[1] + 4, p[0].toFixed(4), 't-w', 27);
});
[[407.05,470,989],[0,506,985],[-210.05,522,986],[443.65,538,989],[0,576,985],[-186.65,589,986],[607.95,605,989],[28.85,662,989],[0,664,985]].forEach(function (p) {
  rect(983, p[1] - 4, 3, 1, '#fff');
  var s = p[0].toFixed(2);
  label(p[2], p[1] + 2, s, 't-w', s.length * 4.7 + (s.indexOf('-') === 0 ? 0 : 1));
});

// current-price tags
rect(985, 144, 34, 12, '#7fe020');
label(988, 154, '1.5940', 't-k', 27);
rect(985, 295, 34, 11, '#ffff20');
label(988, 304, '1.5775', 't-k', 27);
rect(985, 382, 34, 11, '#ffff20');
label(988, 391, '1.5680', 't-k', 27);

// time axis
[['21 May 2009',193],['21 May 21:00',257],['22 May 05:00',321],['22 May 13:00',385],['22 May 21:00',449],['25 May 06:00',513],['25 May 14:00',577],['25 May 22:00',641],['26 May 06:00',705],['26 May 14:00',769]].forEach(function (t, i) {
  rect(t[1] + 1, 678, 1, 4, '#fff');
  label(t[1], 690, t[0], 't-w', i === 0 ? 55 : 58);
});

// chart-shift marker
add('path', { d: 'M818 105h9l-4.500 4.500z', fill: '#7a8a9a' });

// mouse pointer
add('path', { d: 'M826.500 226.500v14l3.500-3 3 7 3-1-3-7h5z', fill: '#fff', stroke: '#000' });

// window edge right of the chart
rect(1022, 103, 2, 592, '#ece9d8');
```
